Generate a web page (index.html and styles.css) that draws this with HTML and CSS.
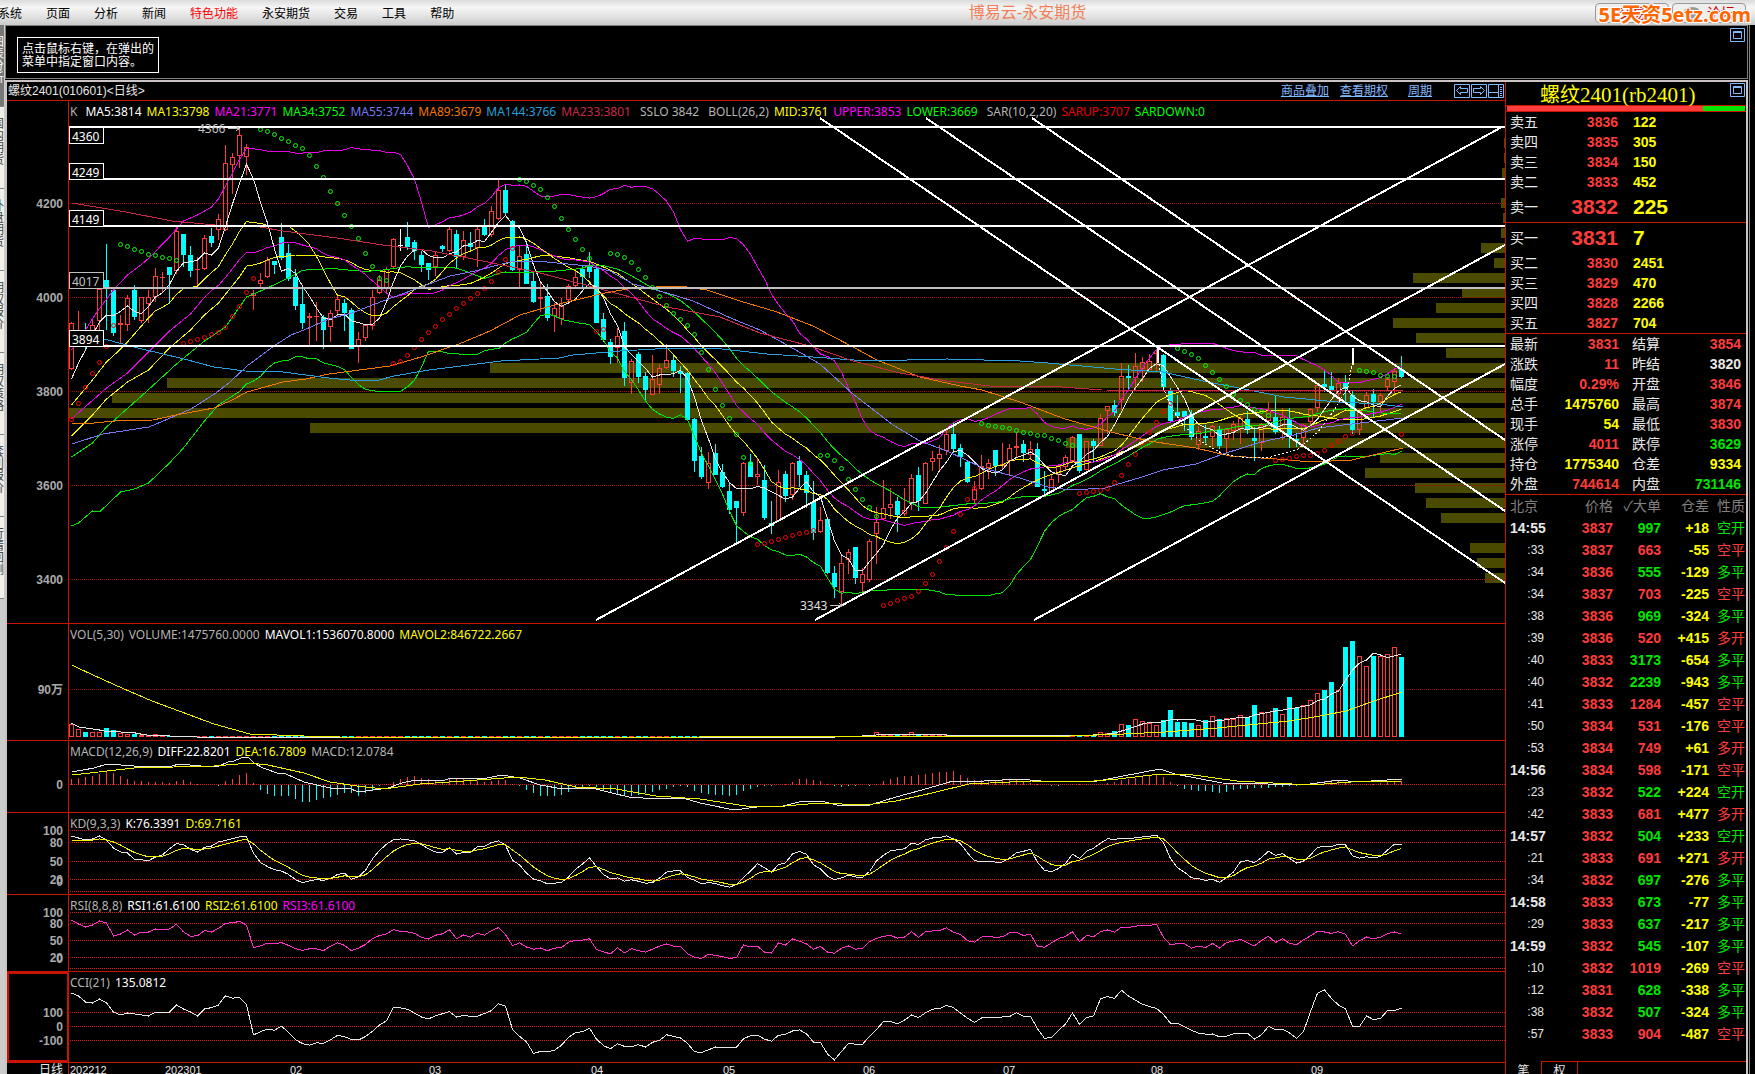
FILE: index.html
```html
<!DOCTYPE html>
<html lang="zh-CN">
<head>
<meta charset="utf-8">
<title>博易云-永安期货</title>
<link rel="stylesheet" href="styles.css">
</head>
<body>
<header class="menubar">
  <nav class="menu">
    <button>系统</button><button>页面</button><button>分析</button><button>新闻</button><button class="hot">特色功能</button><button>永安期货</button><button>交易</button><button>工具</button><button>帮助</button>
  </nav>
  <h1 class="app-title">博易云-永安期货</h1>
  <div class="menu-actions">
    <button class="action">交易</button>
    <button class="action"><svg width="18" height="12" viewBox="0 0 18 12"><ellipse cx="9" cy="6" rx="9" ry="6" fill="#999"/></svg>论坛</button>
    <span class="watermark">5E天资5etz.com</span>
  </div>
</header>
<div class="workspace">
  <nav class="tabs">
    <button class="active"><span>图表分析</span></button>
    <button><span>国内期货</span></button>
    <button><span>外盘期货</span></button>
    <button><span>期权报价</span></button>
    <button><span>期权策略</span></button>
    <button><span>套利报价</span></button>
    <button><span>行情回测</span></button>
  </nav>
  <div class="windows">
    <section class="notice">
      <p>点击鼠标右键，在弹出的菜单中指定窗口内容。</p>
      <button class="tool" aria-label="最大化"><svg width="15" height="14" viewBox="0 0 15 14"><path d="M.5.5h14v13H.5zM3.500 3.500h8v7h-8zM3 4.500h9"/></svg></button>
    </section>
    <main class="main">
      <section class="chart">
        <div class="chart-head">
          <h2>螺纹2401(010601)&lt;日线&gt;</h2>
          <div class="links"><a href="#">商品叠加</a><a href="#">查看期权</a><a href="#" class="period">周期</a></div>
          <div class="tools">
            <button class="tool" aria-label="后退"><svg width="16" height="14" viewBox="0 0 16 14"><path d="M.5.5h15v13H.5zM2.500 6.500l4-4v2h7v4h-7v2z"/></svg></button>
            <button class="tool" aria-label="前进"><svg width="16" height="14" viewBox="0 0 16 14"><path d="M.5.5h15v13H.5zM13.500 6.500l-4-4v2h-7v4h7v2z"/></svg></button>
            <button class="tool" aria-label="布局"><svg width="16" height="14" viewBox="0 0 16 14"><path d="M.5.5h15v13H.5zM1 8.500h10M10.500 1v12M12 3.500h2M12 5.500h2M12 7.500h2M12 9.500h2M12 11.500h2"/></svg></button>
          </div>
        </div>
        <div class="panes">
          <div class="pane" id="price"><div class="scale"></div><div class="plot"><div class="legend legend-k"><span class="g">K</span><span class="w">MA5:3814</span><span class="y">MA13:3798</span><span class="m">MA21:3771</span><span class="l">MA34:3752</span><span class="b">MA55:3744</span><span class="o">MA89:3679</span><span class="c">MA144:3766</span><span class="r">MA233:3801</span><span class="g lead">SSLO&nbsp;3842</span><span class="g lead">BOLL(26,2)</span><span class="y">MID:3761</span><span class="m">UPPER:3853</span><span class="l">LOWER:3669</span><span class="g lead">SAR(10,2,20)</span><span class="red">SARUP:3707</span><span class="l">SARDOWN:0</span></div></div></div>
          <div class="pane" id="vol"><div class="scale"></div><div class="plot"><div class="legend"><span class="g">VOL(5,30)</span><span class="g">VOLUME:1475760.0000</span><span class="w">MAVOL1:1536070.8000</span><span class="y">MAVOL2:846722.2667</span></div></div></div>
          <div class="pane" id="macd"><div class="scale"></div><div class="plot"><div class="legend"><span class="g">MACD(12,26,9)</span><span class="w">DIFF:22.8201</span><span class="y">DEA:16.7809</span><span class="g">MACD:12.0784</span></div></div></div>
          <div class="pane" id="kd"><div class="scale"></div><div class="plot"><div class="legend"><span class="g">KD(9,3,3)</span><span class="w">K:76.3391</span><span class="y">D:69.7161</span></div></div></div>
          <div class="pane" id="rsi"><div class="scale"></div><div class="plot"><div class="legend"><span class="g">RSI(8,8,8)</span><span class="w">RSI1:61.6100</span><span class="y">RSI2:61.6100</span><span class="m">RSI3:61.6100</span></div></div></div>
          <div class="pane selected" id="cci"><div class="scale"></div><div class="plot"><div class="legend"><span class="g">CCI(21)</span><span class="w">135.0812</span></div></div></div>
          <div class="dates"><div class="scale">日线</div><div class="plot" id="months"></div></div>
        </div>
      </section>
      <aside class="quote">
        <div class="quote-head">
          <h2>螺纹<span>2401(rb2401)</span></h2>
          <button class="tool" aria-label="最大化"><svg width="15" height="14" viewBox="0 0 15 14"><path d="M.5.5h14v13H.5zM3.500 3.500h8v7h-8zM3 4.500h9"/></svg></button>
        </div>
        <div class="ratio"><i class="up"></i><i class="down"></i></div>
        <table class="book">
          <tr><th>卖五</th><td>3836</td><td>122</td></tr>
          <tr><th>卖四</th><td>3835</td><td>305</td></tr>
          <tr><th>卖三</th><td>3834</td><td>150</td></tr>
          <tr><th>卖二</th><td>3833</td><td>452</td></tr>
          <tr class="best"><th>卖一</th><td>3832</td><td>225</td></tr>
        </table>
        <table class="book">
          <tr class="best"><th>买一</th><td>3831</td><td>7</td></tr>
          <tr><th>买二</th><td>3830</td><td>2451</td></tr>
          <tr><th>买三</th><td>3829</td><td>470</td></tr>
          <tr><th>买四</th><td>3828</td><td>2266</td></tr>
          <tr><th>买五</th><td>3827</td><td>704</td></tr>
        </table>
        <table class="stats">
          <tr><th>最新</th><td class="up">3831</td><th>结算</th><td class="up">3854</td></tr>
          <tr><th>涨跌</th><td class="up">11</td><th>昨结</th><td class="flat">3820</td></tr>
          <tr><th>幅度</th><td class="up">0.29%</td><th>开盘</th><td class="up">3846</td></tr>
          <tr><th>总手</th><td class="y">1475760</th><th>最高</th><td class="up">3874</td></tr>
          <tr><th>现手</th><td class="y">54</td><th>最低</th><td class="up">3830</td></tr>
          <tr><th>涨停</th><td class="up">4011</td><th>跌停</th><td class="down">3629</td></tr>
          <tr><th>持仓</th><td class="y">1775340</td><th>仓差</th><td class="y">9334</td></tr>
          <tr><th>外盘</th><td class="up">744614</td><th>内盘</th><td class="down">731146</td></tr>
        </table>
        <table class="ticks">
          <thead><tr><th>北京</th><th>价格</th><th>✓大单</th><th>仓差</th><th>性质</th></tr></thead>
          <tbody id="ticks"></tbody>
        </table>
        <div class="quote-tabs"><button class="on">笔</button><button>权</button><i></i></div>
      </aside>
    </main>
  </div>
</div>
<script src="script.js"></script>
</body>
</html>
```
FILE: styles.css
```css
* { box-sizing: border-box; }
body { margin: 0; height: 100vh; overflow: hidden; display: flex; flex-direction: column; background: #000; color: #e8e8e8; font: 12px/14px "Liberation Sans", "Noto Sans CJK SC", sans-serif; }
button { font: inherit; color: inherit; background: none; border: 0; padding: 0; }
h1, h2, p { margin: 0; font-weight: normal; }
table { border-collapse: collapse; table-layout: fixed; width: 100%; }
th, td { padding: 0; font-weight: normal; text-align: left; white-space: nowrap; }

.menubar { display: grid; grid-template-columns: 1fr auto 1fr; align-items: center; height: 25px; flex: none; color: #000; background: linear-gradient(#dcdcdc, #f6f6f6 30%, #e6e6e6 60%, #cacaca); }
.menu { display: flex; gap: 24px; margin-left: -2px; padding-top: 2px; }
.menu .hot { color: #f00; }
.app-title { font-size: 16px; line-height: 25px; color: #f08058; padding-left: 300px; }
.menu-actions { position: relative; display: flex; justify-content: flex-end; gap: 3px; padding-right: 9px; }
.action { width: 74px; height: 20px; border: 1px solid #999; border-radius: 4px; color: #c00; font-size: 14px; display: flex; align-items: center; justify-content: center; gap: 6px; background: #eee; }
.watermark { position: absolute; right: 4px; top: 0; font: bold 20px/24px "Noto Sans", "Noto Sans CJK SC", sans-serif; color: #f60; text-shadow: 1px 1px #fff, -1px -1px #fff, 1px -1px #fff, -1px 1px #fff; white-space: nowrap; }

.workspace { flex: 1; min-height: 0; display: flex; padding-right: 5px; }
.tabs { width: 5px; flex: none; overflow: hidden; display: flex; flex-direction: column; background: #ccc; }
.tabs button { display: flex; justify-content: flex-end; width: 4px; height: 82px; padding-top: 11px; background: #f0f0e8; color: #444; border-bottom: 1px solid #888; }
.tabs .active { background: #777; color: #fff; }
.tabs span { width: 12px; flex: none; line-height: 12px; word-break: break-all; }
.windows { flex: 1; min-width: 0; display: flex; flex-direction: column; border-right: 1px solid #808080; padding-right: 1px; }
.notice { display: flex; justify-content: space-between; align-items: flex-start; height: 54px; margin-bottom: 1px; padding: 2px 2px 0 11px; border: 1px solid #808080; }
.notice p { width: 142px; margin-top: 9px; padding: 5px 4px 3px; border: 1px solid #fff; color: #fff; line-height: 13px; }
.tool { display: block; height: 14px; }
.tool svg { display: block; fill: none; stroke: #82b9ff; }

.main { flex: 1; min-height: 0; display: grid; grid-template-columns: 1fr 241px; border: 2px solid #ccc4c4; border-bottom: 0; }
.chart { display: flex; flex-direction: column; min-width: 0; min-height: 0; }
.chart-head { display: flex; align-items: center; height: 19px; border-bottom: 1px solid #c81400; padding: 0 1px; }
.chart-head h2 { font-size: 12px; }
.links { display: flex; gap: 11px; margin-left: auto; }
.links a { color: #82b9ff; }
.links .period { margin-left: 9px; }
.tools { display: flex; gap: 1px; margin-left: 22px; }

.panes { flex: 1; min-height: 0; display: grid; grid-template-rows: 523fr 117fr 72fr 82fr 77fr 91fr 11px; }
.pane, .dates { display: grid; grid-template-columns: 62px 1fr; min-height: 0; }
.pane { border-bottom: 1px solid #c81400; }
.scale { position: relative; border-right: 1px solid #c81400; color: #aaa; font-weight: bold; }
.scale span { position: absolute; right: 5px; margin-top: -7px; }
.selected .scale { outline: 2px solid #c81400; outline-offset: -2px; }
.plot { position: relative; min-width: 0; min-height: 0; overflow: hidden; }
.plot svg { position: absolute; inset: 0; width: 100%; height: 100%; }
.legend { position: relative; z-index: 1; display: flex; gap: 5px; padding: 2px 0 0 1px; font: 12px/17px "Noto Sans", sans-serif; white-space: nowrap; }
.legend-k .w { margin-left: 3px; }
.legend .lead { margin-left: 4px; }
.dates .scale { padding-right: 5px; text-align: right; font-weight: normal; color: #e8e8e8; }
#months { font-size: 11px; line-height: 15px; }
#months span { position: absolute; top: 0; }
.w { color: #fff; } .g { color: #b4b4b4; } .y { color: #ff0; } .m { color: #f0f; } .l { color: #0f0; }
.b { color: #7878f0; } .o { color: #f07800; } .c { color: #28a0dc; } .r { color: #c82846; } .red { color: #e60000; }

.quote { border-left: 1px solid #c81400; display: flex; flex-direction: column; min-height: 0; color: #e8e8e8; font-size: 14px; line-height: 20px; }
.quote-head { display: flex; align-items: flex-start; height: 24px; padding: 1px 1px 0 34px; border-bottom: 1px solid #c81400; flex: none; }
.quote-head h2 { flex: 1; font: 20px/22px "Noto Sans CJK SC", sans-serif; color: #ff0; }
.quote-head h2 span { font-family: "Liberation Serif", serif; font-size: 21px; line-height: 20px; }
.ratio { display: flex; height: 6px; padding: 0 1px; flex: none; border-bottom: 1px solid #c81400; }
.ratio i { background: #ff3c3c; flex: 196; }
.ratio .down { background: #00e600; flex: 42; }
.quote table { flex: none; }
.quote td { font-weight: bold; }
.quote th { padding-left: 4px; }
.book { border-bottom: 1px solid #c81400; }
.book tr { height: 20px; }
.book th { width: 52px; }
.book td { width: 60px; text-align: right; color: #ff3c3c; }
.book td:last-child { width: auto; text-align: left; padding-left: 15px; color: #ff0; }
.book .best { height: 30px; }
.book .best td { font-size: 21px; }
.stats { border-bottom: 1px solid #c81400; }
.stats th { width: 40px; }
.stats td { width: 73px; text-align: right; }
.stats th + td + th { width: 50px; padding-left: 13px; }
.stats td:last-child { width: auto; padding-right: 5px; }
.up { color: #ff3c3c; } .down { color: #00e600; } .flat { color: #e8e8e8; }
.stats td.y { color: #ff0; }
.ticks tr { height: 22px; }
.ticks th { color: #808080; text-align: right; padding-left: 0; }
.ticks th:first-child { width: 46px; padding-left: 4px; text-align: left; }
.ticks th:nth-child(2) { width: 61px; }
.ticks th:nth-child(3), .ticks th:nth-child(4) { width: 48px; }
.ticks th:nth-child(5) { padding-left: 8px; text-align: left; }
.ticks td { text-align: right; }
.ticks td:first-child { padding-left: 4px; text-align: left; }
.ticks td.sec { text-align: right; padding-right: 8px; font-size: 12px; font-weight: normal; }
.ticks td:nth-child(4) { color: #ff0; }
.ticks td:last-child { font-weight: normal; text-align: left; padding-left: 8px; }
.quote-tabs { display: flex; margin-top: 16px; flex: none; height: 20px; font-size: 12px; }
.quote-tabs button { width: 36px; border: 1px solid #c81400; border-left: 0; border-bottom: 0; line-height: 16px; }
.quote-tabs .on { border-top: 0; }
.quote-tabs i { flex: 1; border-top: 1px solid #c81400; }
```
FILE: script.js
```js
const TOP = { price: [101, 522], vol: [624, 116], macd: [741, 71], kd: [813, 81], rsi: [895, 76], cci: [972, 90] };
const LEFT = 69, WIDTH = 1436, STEP = 7;
const X = i => 71.5 + STEP * i;
const NS = 'http://www.w3.org/2000/svg';

// One bar per trading day: direction, high, body top, body bottom, low.
const bars = `r322,323,369,370 r311,330,344,346 c323,335,344,350 r320,325,345,346 r287,289,321,336 c244,280,287,330 c287,290,333,336 r315,323,325,344 r295,298,325,331 c285,290,317,320
r297,297,321,323 r290,297,304,323 r268,276,297,302 r272,277,278,292 c267,267,275,304 r226,231,271,274 c234,234,255,267 c246,255,271,277 r257,269,270,289 r235,238,269,270
c228,236,243,247 r214,219,230,240 r145,163,230,231 r153,157,165,194 r128,135,156,168 r144,147,157,175 r290,293,296,310 r273,280,284,287 r257,260,277,278 c261,261,265,274
c223,237,258,260 c244,253,279,281 c269,277,306,310 c287,304,323,329 r313,316,318,345 r302,316,317,341 c315,317,330,349 r310,313,327,342 r295,299,311,317 c299,303,313,331
c308,310,349,349 r332,339,346,363 r325,325,338,341 r290,297,326,330 r275,280,293,294 r267,269,289,293 r238,239,267,268 w229,245,246,251 c222,237,247,250 c240,242,251,260
c251,255,265,272 c263,263,270,280 r251,255,267,276 c245,246,249,252 r227,229,251,252 c230,234,257,268 r231,240,257,260 c232,243,247,252 r226,229,248,267 c219,226,235,236
r206,211,235,237 r179,190,219,220 c184,190,213,216 c220,221,270,271 r245,256,270,287 c243,254,284,284 c271,281,302,303 r281,297,299,312 c284,296,318,321 r303,308,316,332
r298,306,319,325 r284,286,300,304 r270,277,286,289 c265,269,277,287 c252,266,272,278 c265,269,323,323 c313,319,340,342 c339,342,357,364 r328,336,348,363 c322,331,378,386
r359,361,383,394 c352,354,377,383 c372,376,390,400 r355,379,395,395 r364,368,385,394 r344,360,368,369 c354,360,371,377 c366,371,374,393 c372,373,420,421 c418,419,461,472
c447,456,477,479 r452,463,483,489 c444,453,475,475 c464,472,487,488 c482,491,510,514 c501,501,508,543 r462,463,513,516 c454,462,477,477 r459,474,477,485 c465,480,518,520
c501,523,526,534 r470,482,521,522 c471,474,496,502 r462,463,495,500 c456,461,475,487 c471,475,493,508 c481,502,533,540 r507,520,532,533 c518,519,573,574 c566,573,587,598
r555,563,592,604 r549,552,560,574 c547,547,578,584 r568,574,583,592 r539,541,580,582 r507,522,534,564 r480,508,519,520 r488,504,508,519 c497,501,515,532 r488,510,514,516
r474,478,504,510 c467,475,501,511 r462,463,504,504 r451,458,462,471 r445,454,459,470 r430,434,451,455 c422,434,449,453 c444,448,457,467 c461,462,482,483 r481,489,500,503
r455,466,489,490 r459,463,468,479 c450,450,466,476 r443,464,466,470 r444,448,461,476 r432,446,448,458 c440,444,453,462 r441,449,455,460 c443,449,487,487 c471,489,491,496
r474,479,492,493 r464,465,475,483 r455,457,467,470 r436,437,461,463 c434,434,471,473 r441,441,470,470 c439,441,446,463 r414,418,446,446 r406,406,411,434 c400,405,413,416
r363,376,400,410 c365,376,377,389 r353,366,378,390 r357,362,369,382 r354,361,370,370 r349,353,354,371 c354,355,387,387 c388,390,421,422 c395,412,416,416 c411,411,417,431
c410,414,437,440 r426,431,445,450 c425,436,438,443 r425,426,437,447 c426,430,446,449 r428,429,439,454 r421,424,431,440 r416,418,429,444 c411,419,430,434 c427,438,441,461
r423,425,443,451 r402,410,421,421 c396,417,432,434 r408,417,429,440 c408,419,436,448 c433,439,441,447 r424,425,438,446 r408,409,422,425 r383,385,408,412 c370,384,387,392
c372,386,391,391 r378,383,394,402 c375,383,389,402 c391,395,430,434 r409,411,430,435 r392,395,408,408 c389,394,402,418 r393,395,402,411 r377,379,387,391 r369,371,382,395
c356,369,377,378`.split(/\s+/).map(s => {
  const [high, top, bottom, low] = s.slice(1).split(',').map(Number);
  return { up: s[0] !== 'c', white: s[0] === 'w', high, top, bottom, low, close: s[0] === 'c' ? bottom : top };
});
const N = bars.length;
const close = bars.map(b => b.close);

function svg(id) {
  const s = document.createElementNS(NS, 'svg');
  s.setAttribute('viewBox', `${LEFT} ${TOP[id][0]} ${WIDTH} ${TOP[id][1]}`);
  s.setAttribute('preserveAspectRatio', 'none');
  s.setAttribute('shape-rendering', 'crispEdges');
  document.querySelector(`#${id} .plot`).append(s);
  return s;
}
function add(parent, tag, attrs, text) {
  const e = document.createElementNS(NS, tag);
  for (const k in attrs) e.setAttribute(k, attrs[k]);
  if (text) e.textContent = text;
  parent.append(e);
  return e;
}
const stroke = (s, d, color, width = 1, extra = {}) => add(s, 'path', { d, fill: 'none', stroke: color, 'stroke-width': width, ...extra });
const poly = (s, pts, color, width) => stroke(s, 'M' + pts.map(p => p[0] + ' ' + p[1].toFixed(1)).join('L'), color, width);
const series = (s, ys, color, width) => poly(s, ys.map((y, i) => [X(i), y]), color, width);
const pairs = t => t.trim().split(/\s+/).map(p => p.split(',').map(Number));
const grid = (s, y, color = '#960000') => stroke(s, `M${LEFT + 1} ${y + .5}H1505`, color, 1, { 'stroke-dasharray': '1 1' });
function labels(id, list) {
  const box = document.querySelector(`#${id} .scale`);
  list.forEach(([text, y]) => {
    const e = document.createElement('span');
    e.textContent = text;
    e.style.top = (y - TOP[id][0]) / TOP[id][1] * 100 + '%';
    box.append(e);
  });
}
function interp(keys, x) {
  for (let k = 1; k < keys.length; k++) {
    const [a, ya] = keys[k - 1], [b, yb] = keys[k];
    if (x <= b) return ya + (yb - ya) * (x - a) / (b - a);
  }
  return keys[keys.length - 1][1];
}
const mean = (a, i, n) => a.slice(i - n + 1, i + 1).reduce((p, c) => p + c, 0) / n;
const ma = (n, seed) => close.map((_, i) => i >= n - 1 ? mean(close, i, n) : interp(seed, i));

/* price pane */
const P = svg('price');
labels('price', [['4200', 204], ['4000', 298], ['3800', 392], ['3600', 486], ['3400', 580]]);
pairs('1504,138 1504,153 1502,168 1501,198 1503,213 1501,228 1481,243 1494,258 1413,273 1462,288 1436,303 1393,318 1416,333 1446,348 490,363 167,378 112,393 69,408 310,423 1066,438 1380,453 1365,468 1415,483 1426,498 1441,513 1470,543 1477,558 1485,573')
  .forEach(([x, y]) => add(P, 'rect', { x, y, width: 1505 - x, height: 10, fill: '#4b4b00' }));
[203, 297, 391, 485, 579].forEach(y => grid(P, y, '#a01400'));

bars.forEach((b, i) => {
  const x = X(i), h = Math.max(b.bottom - b.top, 1);
  if (b.white) return stroke(P, `M${x} ${b.high}V${b.low}M${x - 2.5} ${b.top + .5}h5`, '#fff');
  if (!b.up) {
    stroke(P, `M${x} ${b.high}V${b.low}`, '#0ff');
    add(P, 'rect', { x: x - 2.5, y: b.top, width: 5, height: Math.max(h, 2), fill: '#0ff' });
  } else {
    stroke(P, `M${x} ${b.high}V${b.top}M${x} ${b.bottom}V${b.low}`, '#ff3c3c');
    if (h < 3) add(P, 'rect', { x: x - 2.5, y: b.top, width: 5, height: h, fill: '#ff3c3c' });
    else add(P, 'rect', { x: x - 2, y: b.top + .5, width: 4, height: h - 1, fill: 'none', stroke: '#ff3c3c' });
  }
});

const seedMid = [[0, 436], [3, 415], [5, 399], [8, 382], [11, 370], [14, 348], [17, 330], [19, 315], [21, 303], [25, 268]];
const mid = ma(26, seedMid);
const dev = i => Math.sqrt(close.slice(i - 25, i + 1).reduce((p, c) => p + (c - mid[i]) ** 2, 0) / 26);
const upperSeed = [[0, 350], [2, 330], [3.5, 313], [6, 290], [8, 275], [10.5, 262], [14, 237], [16, 221], [18, 215], [20, 207], [21, 199], [23, 173], [25, 146]];
const lowerSeed = [[0, 526], [1, 523], [3, 511], [4, 512], [7, 492], [9, 489], [11, 483], [14, 463], [16, 448], [19, 421], [21, 405], [23, 396], [25, 387]];
series(P, close.map((_, i) => i > 24 ? mid[i] - 2 * dev(i) : interp(upperSeed, i)), '#e600e6');
series(P, close.map((_, i) => i > 24 ? mid[i] + 2 * dev(i) : interp(lowerSeed, i)), '#00e600');
series(P, mid, '#f0f000');
series(P, ma(34, [[0, 457], [3, 443], [5, 427], [10, 396], [15, 364], [19, 341], [22, 327], [25, 297], [28, 288], [33, 271]]), '#00e600');
series(P, ma(21, [[0, 419], [5, 388], [8, 373], [11, 352], [14, 331], [17, 314], [20, 289]]), '#e600e6');
series(P, ma(13, [[0, 405], [3, 380], [5, 362], [7.5, 346], [9.5, 330], [12, 310]]), '#f0f000');
series(P, ma(5, [[0, 379], [1, 363], [2, 350], [3, 335], [4, 322]]), '#e6e6e6');
poly(P, pairs('72,444 103,434 149,427 168,419 191,409 216,393 230,382 247,366 274,346 291,335 304,330 329,319 352,313 375,304 413,290 450,276 475,271 498,265 515,261 536,261 589,266 610,271 633,284 667,293 693,301 733,319 760,330 787,345 820,364 853,394 893,425 920,441 947,451 983,468 1020,478 1048,487 1071,490 1105,488 1142,477 1163,470 1196,464 1223,454 1261,442 1294,435 1318,428 1352,424 1403,418'), '#7878f0');
poly(P, pairs('72,423 94,423 115,421 153,420 176,415 214,408 230,401 247,392 283,382 306,379 329,374 367,369 390,366 421,357 459,344 490,331 520,315 547,307 600,294 633,288 680,286 707,290 740,301 777,312 813,326 853,347 877,360 920,377 960,386 982,390 1020,402 1065,419 1115,433 1149,441 1196,448 1230,456 1277,459 1311,462 1352,460 1403,448'), '#f07800');
poly(P, pairs('70,335 104,339 138,348 184,359 214,367 245,371 283,372 329,378 360,381 379,380 394,376 429,370 501,361 559,358 573,355 620,351 673,348 713,348 767,354 813,357 867,361 947,359 1020,361 1048,363 1115,369 1163,372 1203,381 1244,389 1284,397 1338,402 1379,404 1403,407'), '#28a0dc');
poly(P, pairs('72,203 126,212 172,221 226,226 260,227 283,231 337,238 383,245 432,251 478,260 536,272 597,288 667,307 720,317 760,333 810,346 853,361 900,373 947,381 990,386 1048,386 1102,390 1403,391'), '#c82846');

// SAR points: first bar index, then one y per bar.
const sar = (color, rows) => rows.forEach(([start, ...ys]) => ys.forEach((y, k) =>
  add(P, 'circle', { cx: X(start + k), cy: y + .5, r: 2, fill: 'none', stroke: color, 'shape-rendering': 'auto' })));
sar('#00ff00', [
  [7, 244, 246, 249, 251, 254, 255, 257, 258, 260],
  [27, 129, 131, 134, 138, 141, 145, 148, 155, 166, 177, 191, 203, 215, 226, 238, 253, 266, 278, 280],
  [64, 179, 181, 185, 189, 197, 206, 218, 229, 239, 249, 258],
  [77, 253, 254, 257, 262, 269, 277, 287, 296, 305, 313, 319, 325, 334, 352, 369, 389, 405, 418, 434, 457, 463],
  [107, 455, 455, 460, 468, 479, 489, 499, 507, 516],
  [130, 423, 425, 426, 427, 428, 430, 432, 433, 435, 435, 438, 440, 443, 445],
  [158, 348, 351, 354, 358, 365, 372, 379, 386, 394, 400, 404, 409, 411, 415],
  [184, 370, 371, 372, 375, 376, 376]]);
sar('#ff0000', [
  [0, 419, 403, 387, 373, 362, 346, 325],
  [16, 343, 341, 339, 337, 334, 332, 327, 316, 306, 292, 278],
  [46, 363, 361, 355, 347, 339, 332, 326, 319, 314, 308, 303, 298, 293, 288, 281, 272, 259, 248],
  [75, 331, 329], [98, 544, 543, 541, 539, 537, 535, 533, 532, 530],
  [116, 605, 603, 600, 598, 596, 591, 583, 574, 561, 547, 531, 514, 499, 488],
  [144, 493, 492, 491, 490, 488, 482, 475, 464, 454, 442, 432, 422, 411, 403],
  [172, 460, 459, 458, 456, 455, 455, 453, 450, 445, 441, 436, 433], [190, 434]]);

// Horizontal price levels and trend channels.
[[4360, 127], [4249, 179], [4149, 226], [4017, 288], [3894, 346]].forEach(([v, y]) => {
  const c = v === 4017 ? '#c0c0c0' : '#fff';
  stroke(P, `M${LEFT} ${y}H1505`, c, 2);
  const by = v === 4360 ? y + .5 : y - 15.5;
  add(P, 'rect', { x: 69.5, y: by, width: 34, height: 16, fill: '#000', stroke: c });
  add(P, 'text', { x: 72, y: by + 13, fill: c, 'font-size': 12, 'font-family': 'Noto Sans' }, String(v));
});
stroke(P, 'M820 118L1505 583M926 118L1505 511M1032 118L1505 440M596 620L1502 127M815 620L1505 245M1034 620L1505 364', '#fff', 2);
stroke(P, 'M1158 348V363M1353 348V365', '#fff', 2);
stroke(P, 'M1159 364L1163 387L1171 407L1183 425L1200 441L1223 454L1247 458L1271 457L1298 449L1318 432L1335 409L1348 387L1352 364', '#fff', 1, { 'stroke-dasharray': '2 2' });
add(P, 'text', { x: 198, y: 133, fill: '#c0c0c0', 'font-size': 12, 'font-family': 'Noto Sans' }, '4366');
add(P, 'text', { x: 800, y: 610, fill: '#e0e0e0', 'font-size': 12, 'font-family': 'Noto Sans' }, '3343');
stroke(P, 'M228 128.500H239M236 126l3 2.500l-3 2.500M830 605.500H842M839 603l3 2.500l-3 2.500', '#c0c0c0');

/* volume pane */
const V = svg('vol'), base = 739;
grid(V, 689);
labels('vol', [['90万', 690]]);
const early = [724, 729, 732, 732, 732, 728, 730, 733, 734, 734, 735, 735, 734, 735];
const late = [732, 733, 731, 724, 725, 719, 721, 723, 725, 720, 710, 722, 722, 723, 725, 720, 716, 719, 718, 719, 715, 718, 705, 712, 712, 708, 714, 697, 708, 705, 700, 693, 690, 682, 690, 647, 641, 656, 666, 656, 656, 654, 647, 657];
const vol = bars.map((b, i) => i < early.length ? early[i] : i >= 147 ? late[i - 147] : i === 115 || i === 120 ? 732 : i > 113 ? 735 : 736);
vol.forEach((y, i) => {
  const b = bars[i], h = 737 - y;
  if (b.up && h > 2) add(V, 'rect', { x: X(i) - 2, y: y + .5, width: 4, height: h - 1, fill: 'none', stroke: '#ff3c3c' });
  else add(V, 'rect', { x: X(i) - 2.5, y, width: 5, height: h, fill: b.up ? '#ff3c3c' : '#0ff' });
});
series(V, vol.map((_, i) => i > 4 ? Math.min(mean(vol, i, 5) + (i < 110 ? 1 : 0), base) : [723, 727, 728, 729, 730][i]), '#e6e6e6');
poly(V, pairs('72,665 80,669 115,685 152,701 179,711 214,724 250,734 304,736 340,737 700,737 850,736 1070,736 1124,734 1165,732 1217,728 1258,724 1289,721 1320,716 1346,711 1371,702 1402,692'), '#f0f000');

/* MACD pane */
const M = svg('macd');
const diff = pairs('72,772 94,768 107,764 134,766 172,766 179,764 201,766 219,766 228,762 234,761 241,758 248,757 254,763 263,768 277,773 286,774 304,782 330,788 348,788 359,792 388,788 402,783 415,780 442,781 451,778 487,778 502,775 520,778 540,785 563,789 592,788 612,793 629,797 656,799 683,798 700,803 734,810 757,807 783,806 803,801 821,801 837,805 870,805 896,797 922,790 953,781 984,781 1020,779 1051,782 1098,781 1118,777 1139,773 1160,769 1175,774 1222,783 1268,784 1302,785 1340,780 1356,782 1402,779');
const dea = pairs('72,775 134,768 214,766 250,763 268,765 304,773 330,782 357,786 384,789 420,784 464,781 518,777 545,780 576,787 616,789 656,796 700,799 746,806 785,806 819,803 865,805 896,801 932,793 969,784 1031,781 1082,782 1118,779 1160,774 1186,774 1237,781 1273,783 1310,785 1351,782 1402,781');
grid(M, 784, '#d21414');
labels('macd', [['0', 785]]);
bars.forEach((_, i) => {
  const d = Math.round(2 * (interp(dea, X(i)) - interp(diff, X(i))));
  if (d) stroke(M, `M${X(i)} 784.500V${784.5 - d}`, d > 0 ? '#ff3c3c' : '#0ff');
});
poly(M, diff, '#e6e6e6');
poly(M, dea, '#f0f000');

/* KD pane */
const K = svg('kd');
[830, 842, 861, 879, 891].forEach(y => grid(K, y, '#d21414'));
labels('kd', [['100', 831], ['80', 843], ['50', 862], ['20', 880], ['0', 882]]);
const kSeed = [836, 838, 840, 839, 836, 840, 848, 852, 853], dSeed = [840, 840, 840, 840, 839, 840, 842, 845, 849];
const kY = v => 891.3 - v * .61, kV = y => (891.3 - y) / .61;
const k = kSeed.map(kV), d = dSeed.map(kV);
for (let i = 9; i < N; i++) {
  const win = bars.slice(i - 8, i + 1);
  const hi = Math.min(...win.map(b => b.high)), lo = Math.max(...win.map(b => b.low));
  k[i] = k[i - 1] * 2 / 3 + (lo - close[i]) / (lo - hi) * 100 / 3;
  d[i] = d[i - 1] * 2 / 3 + k[i] / 3;
}
series(K, k.map(kY), '#e6e6e6');
series(K, d.map(kY), '#f0f000');

/* RSI pane */
const R = svg('rsi');
[912, 923, 940, 957, 968].forEach(y => grid(R, y, '#d21414'));
labels('rsi', [['100', 913], ['80', 924], ['50', 941], ['20', 958], ['0', 959]]);
const rsiSeed = [920, 924, 927, 925, 921, 923, 936, 934, 930, 935, 932, 932, 929, 930, 929];
let gain = 6, move = 7;
const rsi = close.map((c, i) => {
  if (i) {
    const step = close[i - 1] - c;
    gain = (gain * 7 + Math.max(step, 0)) / 8;
    move = (move * 7 + Math.abs(step)) / 8;
  }
  return i < rsiSeed.length ? rsiSeed[i] : 968.3 - gain / move * 56;
});
series(R, rsi, '#ff32c8');

/* CCI pane */
const C = svg('cci');
[1012, 1026, 1040].forEach(y => grid(C, y, '#d21414'));
labels('cci', [['100', 1013], ['0', 1027], ['-100', 1041]]);
const cciSeed = [993, 996, 1002, 1003, 999, 1003, 1012, 1015, 1013, 1014, 1015, 1016, 1012, 1012, 1012, 1005, 1009, 1012, 1016, 1009];
const tp = bars.map(b => (b.high + b.low + b.close) / 3);
series(C, tp.map((t, i) => {
  if (i < 20) return cciSeed[i];
  const m = mean(tp, i, 21);
  const md = tp.slice(i - 20, i + 1).reduce((p, c) => p + Math.abs(c - m), 0) / 21;
  return 1026.3 - (m - t) / (.015 * md) * .14;
}), '#e6e6e6');

/* date axis */
[['202212', 70], ['202301', 165], ['02', 290], ['03', 429], ['04', 591], ['05', 723], ['06', 863], ['07', 1003], ['08', 1151], ['09', 1311]].forEach(([t, x]) => {
  const e = document.createElement('span');
  e.textContent = t;
  e.style.left = (x - LEFT) / WIDTH * 100 + '%';
  document.getElementById('months').append(e);
});

/* tick list: time, price, size, open-interest change, kind */
`14:55 3837 997 +18 空开 down|:33 3837 663 -55 空平 up|:34 3836 555 -129 多平 down|:34 3837 703 -225 空平 up|:38 3836 969 -324 多平 down|:39 3836 520 +415 多开 up|:40 3833 3173 -654 多平 down|:40 3832 2239 -943 多平 down|:41 3833 1284 -457 空平 up|:50 3834 531 -176 空平 up|:53 3834 749 +61 多开 up|14:56 3834 598 -171 空平 up|:23 3832 522 +224 空开 down|:42 3833 681 +477 多开 up|14:57 3832 504 +233 空开 down|:21 3833 691 +271 多开 up|:34 3832 697 -276 多平 down|14:58 3833 673 -77 多平 down|:29 3833 637 -217 多平 down|14:59 3832 545 -107 多平 down|:10 3832 1019 -269 空平 up|:12 3831 628 -338 多平 down|:38 3832 507 -324 多平 down|:57 3833 904 -487 空平 up`
  .split('|').forEach(row => {
    const [t, p, v, c, kind, dir] = row.split(' ');
    const tr = document.createElement('tr');
    [[t, t[0] === ':' ? 'sec' : ''], [p, 'up'], [v, dir], [c, ''], [kind, dir]].forEach(([text, cls]) => {
      const td = document.createElement('td');
      td.textContent = text;
      if (cls) td.className = cls;
      tr.append(td);
    });
    document.getElementById('ticks').append(tr);
  });
```
